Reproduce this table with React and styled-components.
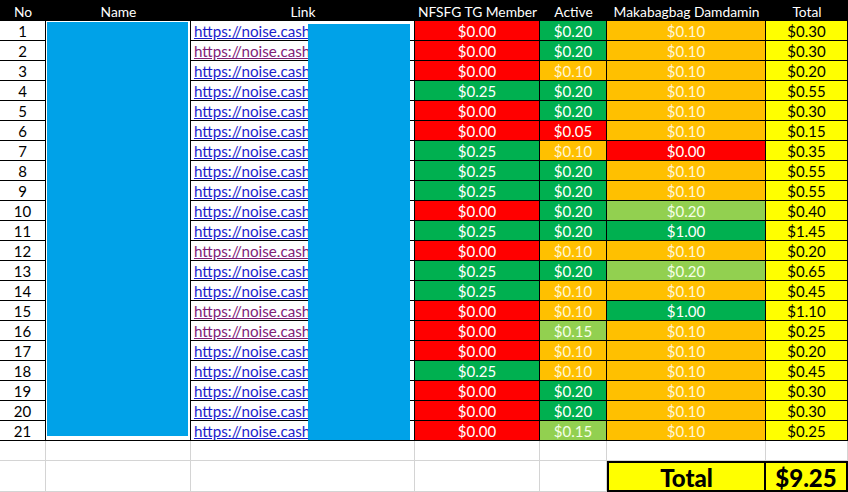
import React from "react";
import styled, { createGlobalStyle, css } from "styled-components";

const Global = createGlobalStyle`
  html, body { margin: 0; padding: 0; background: #fff; }
  body { font-family: Lato, "Open Sans", sans-serif; }
`;

const COLORS = {
  R: "#ff0000",
  G: "#00b050",
  O: "#ffc000",
  L: "#92d050",
  Y: "#ffff00",
};

const TEXT = {
  R: "#ffffff",
  G: "#ffffff",
  O: "#fff6d6",
  L: "#f4ffe8",
  Y: "#000000",
};

const Sheet = styled.div`
  display: grid;
  grid-template-columns: 46px 145px 224px 125px 67px 159px 82px;
  grid-template-rows: 21px repeat(21, 20px) 20px 31px;
  width: 848px;
  height: 492px;
  overflow: hidden;
  font-size: 15px;
`;

const HeadCell = styled.div`
  background: #000;
  color: #fff;
  display: flex;
  align-items: center;
  justify-content: center;
  padding-top: 1px;
  box-sizing: border-box;
  white-space: nowrap;
  font-size: 13.8px;
`;

const Cell = styled.div`
  box-sizing: border-box;
  border-right: 1px solid #000;
  border-bottom: 1px solid #000;
  display: flex;
  align-items: center;
  justify-content: center;
  white-space: nowrap;
  color: #000;
`;

const MoneyCell = styled(Cell)`
  background: ${(p) => COLORS[p.$c]};
  color: ${(p) => TEXT[p.$c]};
`;

const NameCell = styled.div`
  grid-column: 2;
  grid-row: 2 / span 21;
  box-sizing: border-box;
  border-right: 1px solid #000;
  border-bottom: 1px solid #000;
  padding: 1px 2px 4px 1px;
  display: flex;
`;

const Redact = styled.div`
  flex: 1;
  background: #00a2e8;
`;

const LinkRedact = styled.div`
  grid-column: 3;
  grid-row: 2 / span 21;
  margin: 3px 5px 1px 117px;
  background: #00a2e8;
`;

const LinkCell = styled(Cell)`
  justify-content: flex-start;
  padding-left: 3px;
`;

const Link = styled.a`
  color: ${(p) => (p.$visited ? "#80207a" : "#1c1ccc")};
  text-decoration: underline;
  font-size: 15.2px;
`;

const BlankCell = styled.div`
  box-sizing: border-box;
  border-right: 1px solid #d4d4d4;
  border-bottom: 1px solid #d4d4d4;
`;

const TotalCell = styled.div`
  box-sizing: border-box;
  background: #ffff00;
  border: 2px solid #000;
  ${(p) =>
    p.$value &&
    css`
      border-left: none;
    `}
  display: flex;
  align-items: center;
  justify-content: center;
  font-weight: 900;
  font-size: 24px;
  color: #000;
  padding-top: 1px;
`;

const rows = [
  ["0.00", "R", "0.20", "G", "0.10", "O", "0.30"],
  ["0.00", "R", "0.20", "G", "0.10", "O", "0.30"],
  ["0.00", "R", "0.10", "O", "0.10", "O", "0.20"],
  ["0.25", "G", "0.20", "G", "0.10", "O", "0.55"],
  ["0.00", "R", "0.20", "G", "0.10", "O", "0.30"],
  ["0.00", "R", "0.05", "R", "0.10", "O", "0.15"],
  ["0.25", "G", "0.10", "O", "0.00", "R", "0.35"],
  ["0.25", "G", "0.20", "G", "0.10", "O", "0.55"],
  ["0.25", "G", "0.20", "G", "0.10", "O", "0.55"],
  ["0.00", "R", "0.20", "G", "0.20", "L", "0.40"],
  ["0.25", "G", "0.20", "G", "1.00", "G", "1.45"],
  ["0.00", "R", "0.10", "O", "0.10", "O", "0.20"],
  ["0.25", "G", "0.20", "G", "0.20", "L", "0.65"],
  ["0.25", "G", "0.10", "O", "0.10", "O", "0.45"],
  ["0.00", "R", "0.10", "O", "1.00", "G", "1.10"],
  ["0.00", "R", "0.15", "L", "0.10", "O", "0.25"],
  ["0.00", "R", "0.10", "O", "0.10", "O", "0.20"],
  ["0.25", "G", "0.10", "O", "0.10", "O", "0.45"],
  ["0.00", "R", "0.20", "G", "0.10", "O", "0.30"],
  ["0.00", "R", "0.20", "G", "0.10", "O", "0.30"],
  ["0.00", "R", "0.15", "L", "0.10", "O", "0.25"],
];

const visited = new Set([2, 12, 15, 16]);

const headers = ["No", "Name", "Link", "NFSFG TG Member", "Active", "Makabagbag Damdamin", "Total"];

export default function App() {
  return (
    <>
      <Global />
      <Sheet>
        {headers.map((h) => (
          <HeadCell key={h}>{h}</HeadCell>
        ))}
        {rows.map((r, i) => {
          const n = i + 1;
          const rowStyle = { gridRow: n + 1 };
          return (
            <React.Fragment key={n}>
              <Cell style={{ ...rowStyle, gridColumn: 1 }}>{n}</Cell>
              <LinkCell style={{ ...rowStyle, gridColumn: 3 }}>
                <Link href="#" $visited={visited.has(n)}>https://noise.cash</Link>
              </LinkCell>
              <MoneyCell $c={r[1]} style={{ ...rowStyle, gridColumn: 4 }}>${r[0]}</MoneyCell>
              <MoneyCell $c={r[3]} style={{ ...rowStyle, gridColumn: 5 }}>${r[2]}</MoneyCell>
              <MoneyCell $c={r[5]} style={{ ...rowStyle, gridColumn: 6 }}>${r[4]}</MoneyCell>
              <MoneyCell $c="Y" style={{ ...rowStyle, gridColumn: 7 }}>${r[6]}</MoneyCell>
            </React.Fragment>
          );
        })}
        <NameCell>
          <Redact />
        </NameCell>
        <LinkRedact />
        {Array.from({ length: 7 }).map((_, i) => (
          <BlankCell key={"b" + i} />
        ))}
        {Array.from({ length: 5 }).map((_, i) => (
          <BlankCell key={"t" + i} />
        ))}
        <TotalCell>Total</TotalCell>
        <TotalCell $value>$9.25</TotalCell>
      </Sheet>
    </>
  );
}
